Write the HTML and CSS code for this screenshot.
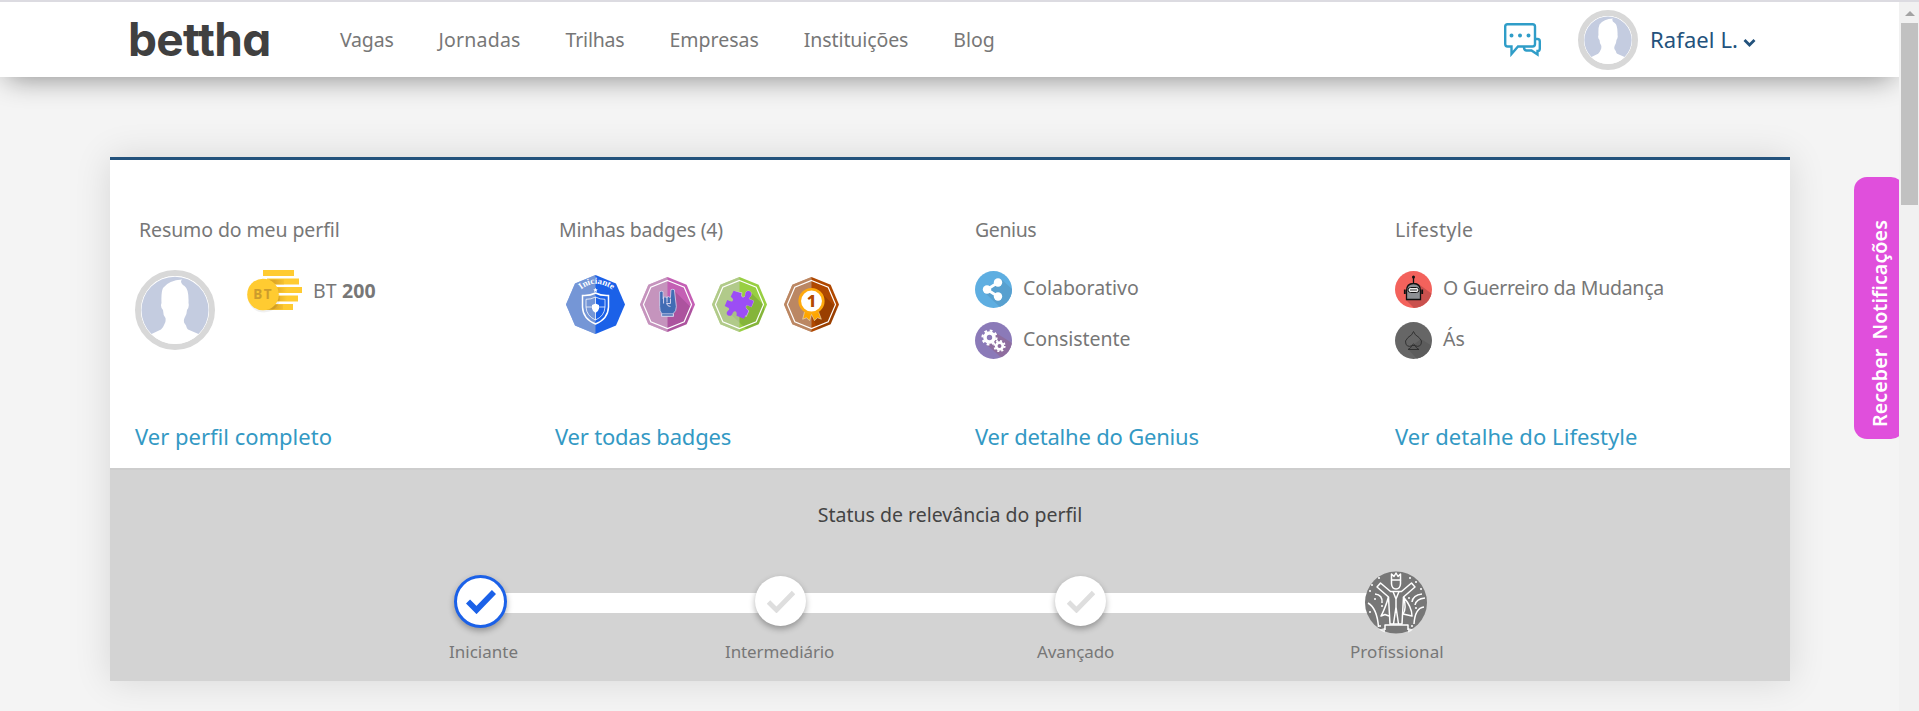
FILE: index.html
```html
<!DOCTYPE html>
<html lang="pt-BR">
<head>
<meta charset="utf-8">
<title>bettha</title>
<link rel="stylesheet" href="styles.css">
</head>
<body>
<svg class="defs" aria-hidden="true">
  <defs>
    <symbol id="avatar" viewBox="0 0 68 68">
      <circle cx="34" cy="34" r="34" fill="#fff"/>
      <path fill="#c4cce0" d="M10.500 58 A33.500 33.500 0 1 1 57.500 58 L47 53.500 C45 52 46 50 44 48 Q42 46 43.500 42 Q46 38 46 34 Q48.500 31 47.500 27 Q48 13 43.500 10 Q40 8 40 5 L41 3.500 Q28 4 22 12 Q20 16 20.500 27 Q19 31 22 34 Q22 39 24.500 42 Q25 46 23.500 48 Q22 52 20 53.500 Z"/>
    </symbol>
    <clipPath id="oct"><path d="M28 0 47.500 8 56 28 47.500 48 28 56 8.500 48 0 28 8.500 8Z"/></clipPath>
    <clipPath id="disc"><circle cx="18.500" cy="18.500" r="18.500"/></clipPath>
  </defs>
</svg>
<div class="window">
  <div class="page">
    <header class="header">
      <a class="logo">be<span>t</span>tha</a>
      <nav class="nav">
        <a class="vagas">Vagas</a><a class="jornadas">Jornadas</a><a class="trilhas">Trilhas</a><a class="empresas">Empresas</a><a class="inst">Instituições</a><a>Blog</a>
      </nav>
      <div class="user">
        <svg class="chat" width="37" height="34" viewBox="0 0 37 34" fill="none" stroke="#2f9dc8" stroke-width="2.400">
          <path stroke-linejoin="miter" d="M3.500 1.200H28.500Q31 1.200 31 3.500V21Q31 23.500 28.500 23.500H14L7.500 31V23.500H3.500Q1.200 23.500 1.200 21V3.500Q1.200 1.200 3.500 1.200Z"/>
          <path d="M31 16H33.500Q35.800 16 35.800 18.500V25.500Q35.800 28 34 28H33.500V31.500L27.500 27.500H22.500Q20 27.500 20 24"/>
          <path stroke-linecap="round" stroke-width="4" d="M7.500 12.500h.01M16 12.500h.01M24.500 12.500h.01"/>
        </svg>
        <span class="avatar small"><svg><use href="#avatar"/></svg></span>
        <span class="name">Rafael L.</span>
        <svg class="caret" width="13" height="8" viewBox="0 0 13 8"><path d="M1.500 1 6.500 6 11.500 1" fill="none" stroke="#23527c" stroke-width="2.800"/></svg>
      </div>
    </header>
    <main class="card">
      <section class="summary">
        <div class="col">
          <h2 class="inset">Resumo do meu perfil</h2>
          <div class="content profile">
            <span class="avatar"><svg><use href="#avatar"/></svg></span>
            <svg class="coins" width="56" height="44" viewBox="0 0 56 44">
              <defs><linearGradient id="shade"><stop offset=".45" stop-color="#c88f20"/><stop offset="1" stop-color="#ffcb31"/></linearGradient></defs>
              <g fill="#ffcb31"><path d="M16 0h31v6H16zM20 8.500h32v6H20zM28 17h27v6H28zM28 25.500h23v6H28zM16 34h30v6H16z"/></g>
              <path fill="url(#shade)" opacity=".6" d="M22 9.500h15v5H28zM30 17.500h10v5H31zM31 26h9v5H30zM22 34.500h14v5H17z"/>
              <ellipse cx="17" cy="27.500" rx="16" ry="15" fill="#000" opacity=".06"/>
              <circle cx="16" cy="24.500" r="15.800" fill="#ffcb31"/>
              <text x="6.300" y="29" class="coin-text">BT</text>
            </svg>
            <span class="balance">BT <b>200</b></span>
          </div>
          <a class="more">Ver perfil completo</a>
        </div>
        <div class="col">
          <h2 class="inset tight">Minhas badges (4)</h2>
          <div class="content badges">
            <svg class="first" width="59" height="59" viewBox="0 0 59 59">
              <path fill="#1b61e8" d="M29.500 0 50 8.500 59 29.500 50 50.500 29.500 59 9 50.500 0 29.500 9 8.500Z"/>
              <path fill="#c6c6c6" opacity=".53" d="M29.500 0V59L9 50.500 0 29.500 9 8.500Z"/>
              <path id="arc" d="M15 14.500Q29.500 3 46 14.500" fill="none"/>
              <text class="badge-text"><textPath href="#arc" textLength="34">Iniciante</textPath></text>
              <path fill="#fff" d="m29.500 12.800.7 1.400 1.500.2-1.100 1.100.3 1.500-1.400-.7-1.400.7.3-1.500-1.100-1.100 1.500-.2z"/>
              <path fill="none" stroke="#fff" stroke-width="1.500" d="M29.500 18Q35 21 42.500 20.500V32Q42 44 29.500 49Q17 44 16.500 32V20.500Q24 21 29.500 18Z"/>
              <path fill="none" stroke="#fff" opacity=".75" d="M29.500 22Q34 24.500 39 24.300V32Q38.500 41 29.500 45Q20.500 41 20 32V24.300Q25 24.500 29.500 22ZM29.500 22V45M20 32H39"/>
              <path fill="#fff" d="M29.500 28.500 33 30V33.500Q32.500 36.500 29.500 38 26.500 36.500 26 33.500V30Z"/>
            </svg>
            <svg width="55" height="55" viewBox="0 0 56 56">
              <g clip-path="url(#oct)"><path fill="#c45fb4" d="M0 0h56v56H0z"/><path fill="#000" opacity=".12" d="M35 14 53 32V56H28V40z"/><path fill="#c6c6c6" opacity=".52" d="M0 0h28v56H0z"/></g>
              <path fill="none" stroke="#fff" stroke-width="1.200" d="M28 3.500 45 10.500 52.500 28 45 45.500 28 52.500 11 45.500 3.500 28 11 10.500Z"/>
              <path fill="#416cb4" stroke="#d9d5ee" stroke-width=".8" d="M20 15q2-1 3.500 0V22Q25 18.500 27 21q2-2 4 0L31.500 13q2-1 3.500 0L37 30Q37 35 34 37V40H22V37Q20 35 20 30ZM22 37.500H34V40H22Z"/>
              <path fill="none" stroke="#d9d5ee" d="M24 20v7M27.500 20v6M31 22v5h-4q1 3 4 3"/>
            </svg>
            <svg width="55" height="55" viewBox="0 0 56 56">
              <g clip-path="url(#oct)"><path fill="#98cf42" d="M0 0h56v56H0z"/><path fill="#000" opacity=".12" d="M40 16 53 29V56H38L19 38z"/><path fill="#c6c6c6" opacity=".55" d="M0 0h28v56H0z"/></g>
              <path fill="none" stroke="#fff" stroke-width="1.200" d="M28 3.500 45 10.500 52.500 28 45 45.500 28 52.500 11 45.500 3.500 28 11 10.500Z"/>
              <path fill="#9c4df5" stroke="#e3d9f0" stroke-width=".6" d="M22.500 15 30.500 16C29.500 19.500 30.500 21 32.500 20.500C35 19.500 33.500 17.500 34.500 15.500C36.500 13 40.500 14.500 40 18C39.500 20.500 37 20.500 37.500 22.500L42.500 24.500 40 30.500C37.500 29 36 27.500 34.500 29.500C33.500 32 36 33 37.500 34.500L35 40 32 38.500M35 40 32 38.500"/>
              <path fill="#9c4df5" d="M22 14 29.500 16.500C28.500 19.500 30 21.500 32 21C34.500 20 33.500 17.500 34.500 15.500C36.500 13 40.500 14.500 40 18C39.500 20.500 37.500 20.500 37.500 22.500L42.500 24.500 40 30.500C37.500 29.500 36 27.500 34.500 29.500C33.500 32 36 33 36.500 34.500L32.500 42.500 25 39.500C25.500 36.500 25 34.500 22.500 35C20.500 36 21 39 18.500 39.500C15 39.500 14 36.500 16 34.500C18 33 17.500 32.500 17 31.500L13 29.500 15.500 23.500C18 24 19.500 26 21 24.500C22.500 22 20 21 19 20Z"/>
            </svg>
            <svg width="55" height="55" viewBox="0 0 56 56">
              <g clip-path="url(#oct)"><path fill="#b04800" d="M0 0h56v56H0z"/><path fill="#000" opacity=".12" d="M37 15 53 31V56H36L28 40z"/><path fill="#c6c6c6" opacity=".5" d="M0 0h28v56H0z"/></g>
              <path fill="none" stroke="#fff" stroke-width="1.200" d="M28 3.500 45 10.500 52.500 28 45 45.500 28 52.500 11 45.500 3.500 28 11 10.500Z"/>
              <path fill="#ffa600" stroke="#e9e0cc" stroke-width=".6" d="M21 35 19 43 23 41.500 26 44.500 28 38 31 44.500 34 41.500 38 43 35 35Z"/>
              <circle cx="28" cy="24.500" r="12" fill="#fff" stroke="#ffaa0c" stroke-width="2.700"/>
              <text x="23.200" y="31" class="medal-text">1</text>
            </svg>
          </div>
          <a class="more tight">Ver todas badges</a>
        </div>
        <div class="col">
          <h2 class="tighter">Genius</h2>
          <div class="content traits">
            <div class="trait">
              <svg width="37" height="37" viewBox="0 0 37 37"><g clip-path="url(#disc)"><path fill="#5eaee1" d="M0 0h37v37H0z"/><path fill="#58a0cf" d="M26 8 37 18V37H26L9 21 24 12z"/></g><path fill="none" stroke="#fff" stroke-width="2.800" d="M23 11.500 12 18.500 23 25.500"/><g fill="#fff"><circle cx="23" cy="11.500" r="4.200"/><circle cx="12" cy="18.500" r="4.200"/><circle cx="23" cy="25.500" r="4.200"/></g></svg>
              <span>Colaborativo</span>
            </div>
            <div class="trait">
              <svg width="37" height="37" viewBox="0 0 37 37"><g clip-path="url(#disc)"><path fill="#8b7ab8" d="M0 0h37v37H0z"/><path fill="#8e6d9e" d="M21 11 37 21V37H28L12 23z"/></g><g fill="none" stroke="#fff"><circle cx="14.500" cy="15.500" r="4.500" stroke-width="3.600"/><circle cx="14.500" cy="15.500" r="7" stroke-width="2.200" stroke-dasharray="2.750 2.750"/><circle cx="24.500" cy="24" r="3.300" stroke-width="2.700"/><circle cx="24.500" cy="24" r="5.200" stroke-width="1.800" stroke-dasharray="2.040 2.040"/></g></svg>
              <span>Consistente</span>
            </div>
          </div>
          <a class="more tight">Ver detalhe do Genius</a>
        </div>
        <div class="col">
          <h2 class="loose">Lifestyle</h2>
          <div class="content traits">
            <div class="trait">
              <svg width="37" height="37" viewBox="0 0 37 37"><g clip-path="url(#disc)"><path fill="#f3625c" d="M0 0h37v37H0z"/><path fill="#c9514e" d="M25 14 37 23V37H19L11 29z"/></g><path fill="#8d9094" stroke="#111" stroke-width="1.300" d="M11.500 28.500V20Q11.500 12.500 18.500 12.500T25.500 20V28.500ZM18.500 12V6"/><circle cx="18.500" cy="6" r="1.500" fill="#111"/><path stroke="#111" stroke-width="1.800" d="M9.800 18.500v4.500M27.200 18.500v4.500"/><rect x="13" y="16.500" width="11" height="5" rx="2.500" fill="#eee" stroke="#111"/><path stroke="#333" d="M15 19h7"/></svg>
              <span class="long">O Guerreiro da Mudança</span>
            </div>
            <div class="trait">
              <svg width="37" height="37" viewBox="0 0 37 37"><g clip-path="url(#disc)"><path fill="#666" d="M0 0h37v37H0z"/><path fill="#5c5c5c" d="M26 17 37 24V37H22L13 27z"/></g><path fill="none" stroke="#2d2d2d" stroke-width=".9" d="M18.500 9.500Q19.500 13 24 15.500 28 19 26 22.500 22.500 26.500 18.500 22 14.500 26.500 11 22.500 9 19 13 15.500 17.500 13 18.500 9.500ZM17 23.500h3q1 2.500 4 4H13q3-1.500 4-4Z"/></svg>
              <span>Ás</span>
            </div>
          </div>
          <a class="more wide">Ver detalhe do Lifestyle</a>
        </div>
      </section>
      <section class="status">
        <h3>Status de relevância do perfil</h3>
        <div class="steps">
          <span class="step done"><svg width="30" height="25" viewBox="0 0 30 25"><path d="M2 12.500 10.500 21 28 3" fill="none" stroke="#1b61e8" stroke-width="5.800"/></svg></span>
          <span class="step"><svg width="28" height="23" viewBox="0 0 28 23"><path d="M1.500 12 9.500 20 26.500 2.500" fill="none" stroke="#dedede" stroke-width="4.800"/></svg></span>
          <span class="step"><svg width="28" height="23" viewBox="0 0 28 23"><path d="M1.500 12 9.500 20 26.500 2.500" fill="none" stroke="#dedede" stroke-width="4.800"/></svg></span>
          <svg class="king" width="62" height="63" viewBox="0 0 62 63">
            <circle cx="31" cy="31.500" r="31" fill="#777"/>
            <g fill="none" stroke="#fff" stroke-width="1.500" stroke-linejoin="round">
              <path d="M26.500 9V3L29 5.500 31 2 33 5.500 35.500 3V9Z"/><path d="M26.500 9V13Q27 18 31 18T35.500 13V9"/>
              <path d="M15.500 12 25.500 20.500H36.500L46.500 12 50 16 38.500 26 37 53H25L23.500 26 12 16Z"/>
              <path d="M28 20.500 31 28 34 20.500M31 36 28.500 53M31 36 33.500 53M31 28V36M23.500 26Q20 38 16 45L20 43.500 24 45M38.500 26Q42 38 38 43L47 45Q47 36 38.500 26M20 59V54H43V59"/>
              <path d="M3 32Q12 37 13.500 56M10 23Q18 24 17 32M59 36Q50 37 49 53M57 23Q48 24 47 31M60 27Q51 28 50 34"/>
              <path stroke-linecap="round" stroke-width="2" d="M14 7h.01M7 14h.01M5 20h.01M10 28h.01M5 41h.01M17 35h.01M45 7h.01M51 11h.01M56 18h.01M44 27h.01M51 37h.01M47 55h.01M15 55h.01"/>
            </g>
            <path fill="#fff" d="M14 58.500 20 57V61.500Q17 60.500 14 58.500ZM43 57 48 58.500Q46 60.500 43 61.500Z" opacity=".8"/>
          </svg>
        </div>
        <div class="labels"><span>Iniciante</span><span>Intermediário</span><span>Avançado</span><span>Profissional</span></div>
      </section>
    </main>
    <button class="notify"><span>Receber Notificações</span></button>
  </div>
  <div class="scrollbar"><i class="up"></i><i class="thumb"></i></div>
</div>
</body>
</html>
```
FILE: styles.css
```css
* { box-sizing: border-box; }
body { margin: 0; font-family: "Noto Sans", "Open Sans", sans-serif; font-size: 19.5px; line-height: 28px; color: #777; background: #f4f4f4; overflow: hidden; }
.defs { position: absolute; width: 0; height: 0; }
.window { display: flex; height: 711px; border-top: 2px solid #dcdbe1; }
.page { position: relative; width: 1899px; overflow: hidden; }
.header { display: flex; align-items: center; height: 75px; padding-left: 128px; background: #fff; box-shadow: 0 8px 28px -7px rgba(0, 0, 0, .45); }
.logo { width: 212px; padding-bottom: 2px; font: 700 46px/56px Inter, sans-serif; letter-spacing: -.7px; font-feature-settings: "cv11"; color: #404040; }
.logo span { letter-spacing: -1.8px; }
.nav { display: flex; width: 1164px; gap: 45px; }
.vagas { letter-spacing: -.2px; }
.jornadas { letter-spacing: .2px; }
.trilhas { letter-spacing: -.2px; }
.inst { letter-spacing: -.1px; }
.user { display: flex; align-items: center; }
.chat { margin-right: 37px; }
.avatar { display: block; flex: none; width: 80px; height: 80px; border: 6px solid #d8d8d8; border-radius: 50%; }
.avatar svg { display: block; width: 100%; height: 100%; }
.small { width: 60px; height: 60px; margin-right: 12px; }
.name { margin-right: 5px; padding-bottom: 1px; font-size: 22px; color: #23527c; letter-spacing: .1px; }
.caret { margin-top: 7px; }

.card { width: 1680px; height: 524px; margin: 80px 0 0 110px; border-top: 3px solid #23527c; background: #fff; box-shadow: 0 0 35px rgba(0, 0, 0, .12); }
.summary { display: grid; grid-template-columns: repeat(4, 420px); height: 308px; padding-top: 56px; }
.col { padding-left: 25px; }
h2, h3 { margin: 0; font-size: 19.5px; font-weight: 400; }
.inset { padding-left: 4px; }
.inset:not(.tight) { letter-spacing: -.1px; }
.tight { letter-spacing: -.2px; }
.tighter { letter-spacing: -.4px; }
.loose { letter-spacing: .35px; }
.wide { letter-spacing: .06px; }
.content { height: 176px; padding-top: 26px; }
.profile { display: flex; align-items: flex-start; }
.coins { margin-left: 32px; }
.coin-text { font: 700 13.5px "Noto Sans", sans-serif; letter-spacing: 1.6px; fill: #cc9c2c; }
.balance { margin: 7px 0 0 10px; letter-spacing: .1px; }
.badges { display: flex; align-items: flex-start; gap: 17px; padding: 33px 0 0 11px; }
.badges .first { margin: -2px -2px 0 0; }
.badge-text { font: 700 9px "Liberation Serif", serif; fill: #fff; }
.medal-text { font: 800 17px "Noto Sans", sans-serif; fill: #b34a00; }
.traits { padding-top: 27px; }
.trait { display: flex; align-items: flex-start; gap: 11px; height: 51px; }
.trait span { margin-top: 3px; letter-spacing: -.05px; }
.trait .long { letter-spacing: -.27px; }
.more { display: block; font-size: 22px; color: #3399c4; line-height: 32px; }

.status { height: 213px; padding-top: 31px; border-top: 2px solid #cdcdcd; background: #d3d3d3; }
.status h3 { text-align: center; color: #444; }
.steps { display: grid; grid-template-columns: 300px 300px 315px 62px; align-items: center; justify-items: start; height: 63px; margin-top: 42px; padding-left: 344px; background: linear-gradient(#fff, #fff) 370px 22px / 910px 20px no-repeat; }
.step { display: flex; align-items: center; justify-content: center; width: 51px; height: 50px; margin: 0 0 3px 1px; border-radius: 50%; background: #fff; box-shadow: 0 3px 6px rgba(0, 0, 0, .3); }
.done { width: 53px; height: 53px; margin: 0 0 2px; border: 3px solid #1b61e8; }
.king { margin-left: -4px; }
.labels { display: flex; margin-top: 4px; padding-left: 339px; font-size: 17px; }
.labels span:nth-child(1) { width: 276px; }
.labels span:nth-child(2) { width: 312px; letter-spacing: -.1px; }
.labels span:nth-child(3) { width: 313px; letter-spacing: -.1px; }
.labels span:nth-child(4) { letter-spacing: .07px; }

.notify { position: absolute; left: 1854px; top: 175px; width: 50px; height: 262px; padding: 0; border: 0; border-radius: 13px; background: #e04fdc; }
.notify span { display: block; width: 28px; height: 248px; margin: -10px 0 0 12px; writing-mode: vertical-rl; transform: rotate(180deg); font: 600 19.8px/28px "Noto Sans", sans-serif; word-spacing: 4px; color: #fff; white-space: nowrap; text-align: left; }
.scrollbar { width: 20px; padding: 9px 1px 0 2px; background: #f1f1f1; }
.up { display: block; width: 0; margin: 0 auto 7px; border: 5px solid transparent; border-top: 0; border-bottom-color: #a3a3a3; }
.thumb { display: block; height: 182px; background: #c1c1c1; }
```
